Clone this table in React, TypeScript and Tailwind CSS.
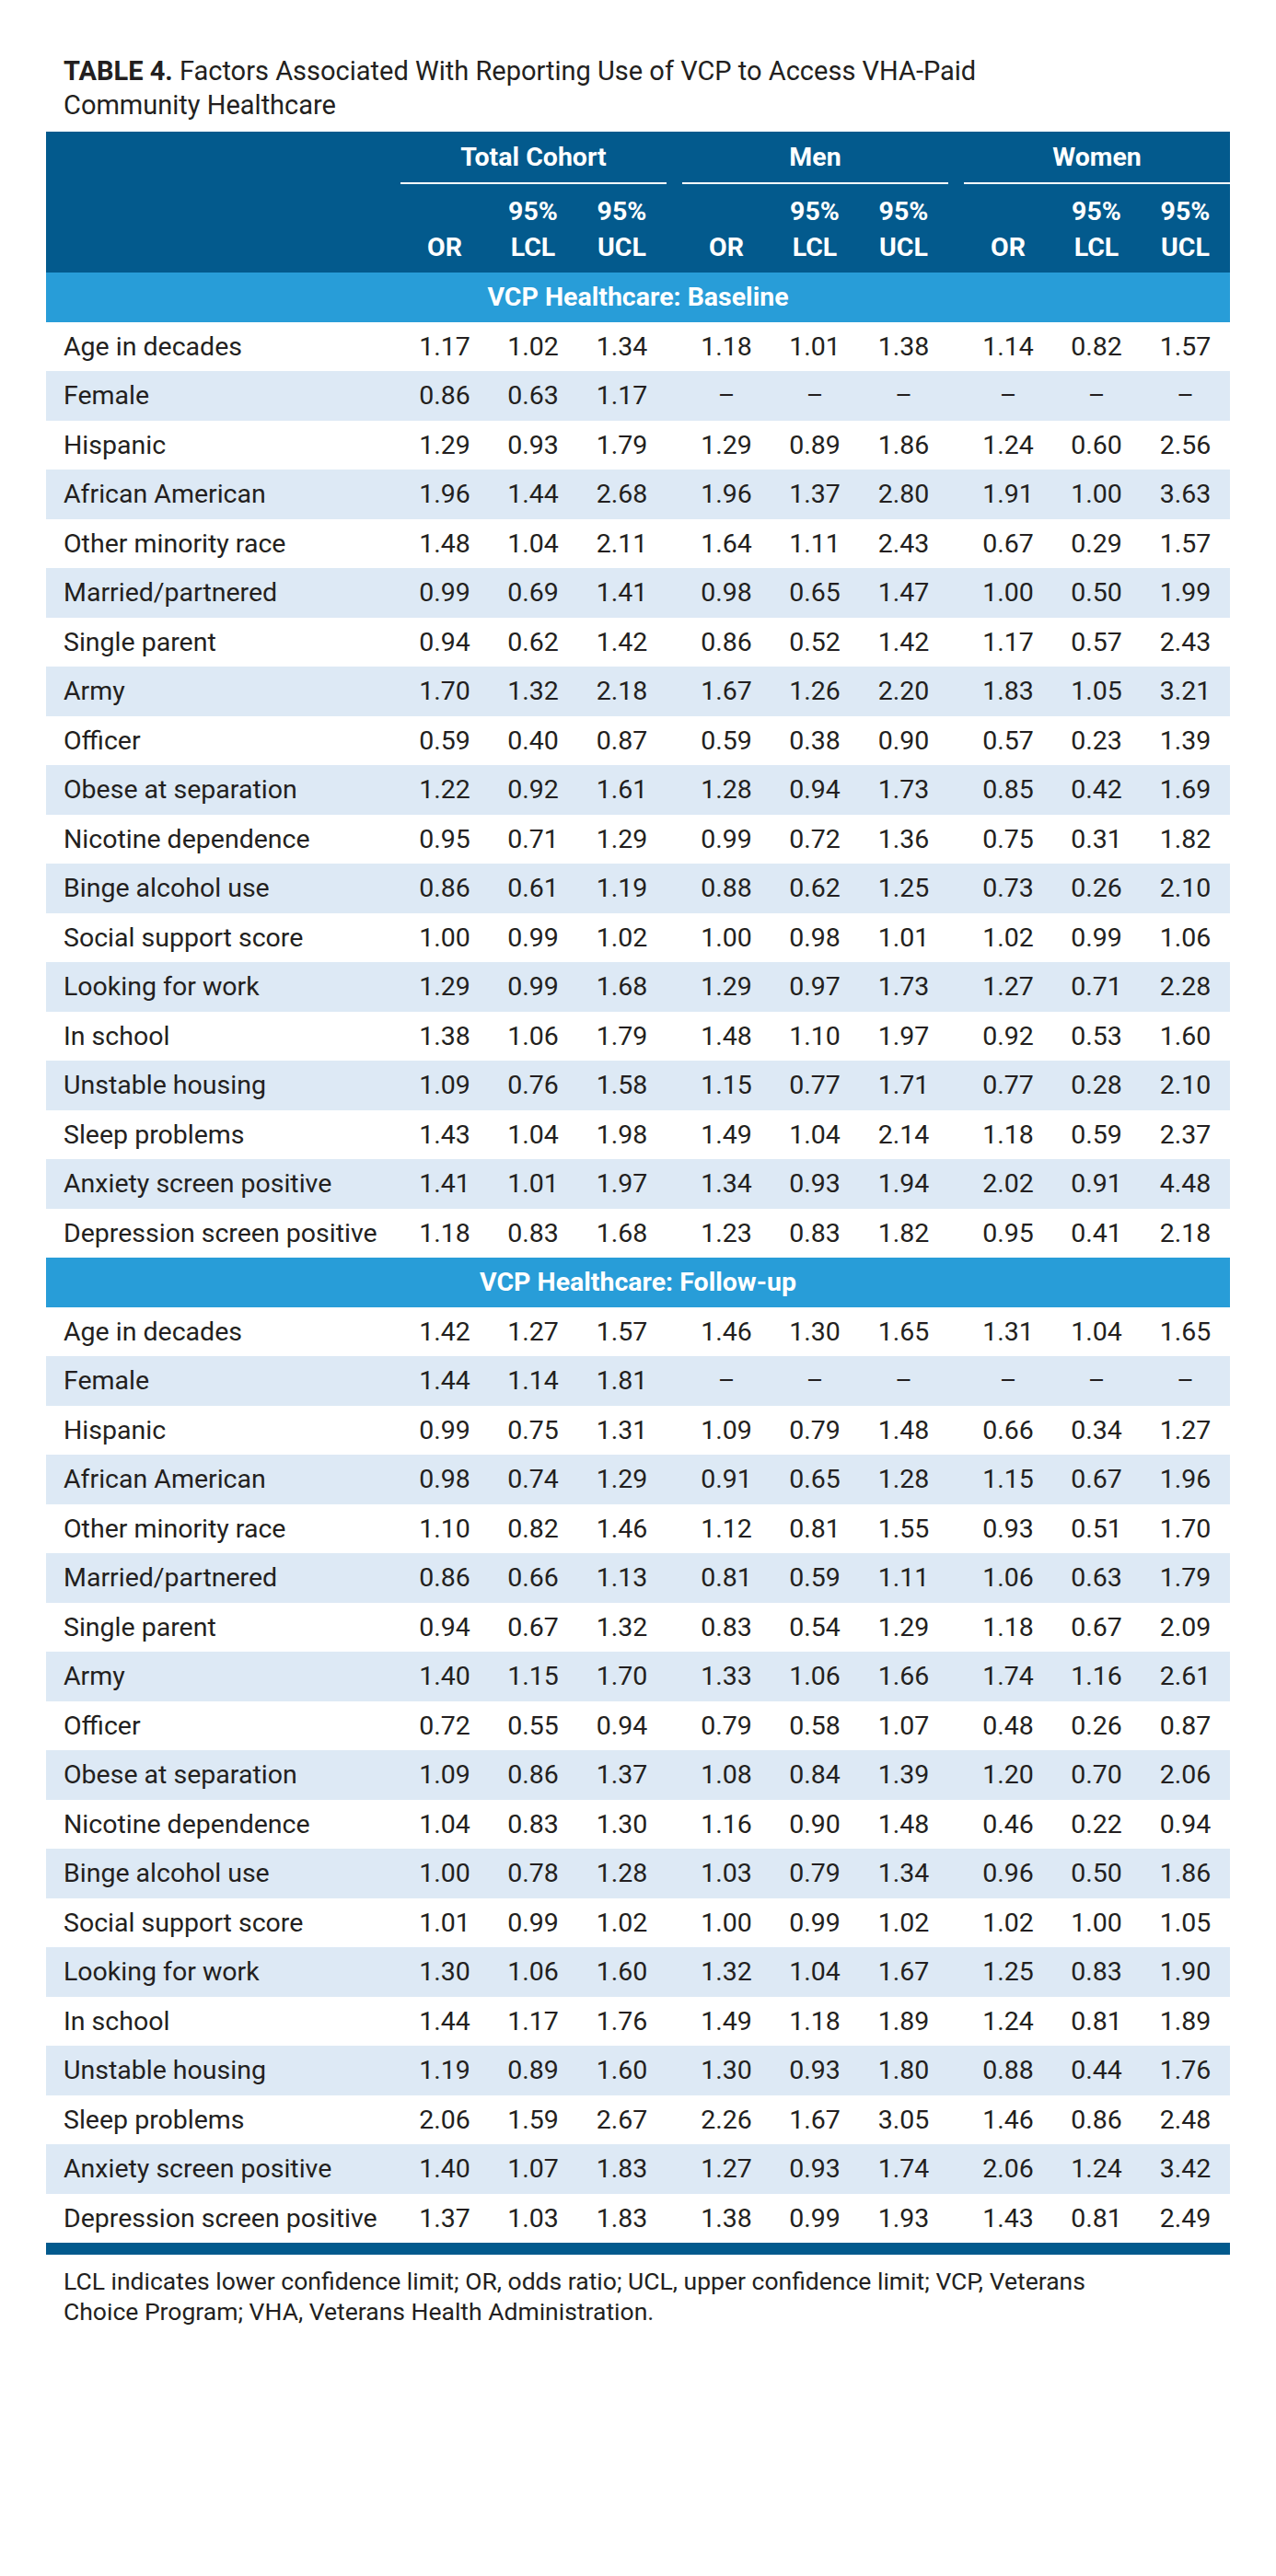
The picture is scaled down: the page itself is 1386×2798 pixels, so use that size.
import React from 'react';

type Row = [string, string[]];

const baseline: Row[] = [
  ['Age in decades', ['1.17', '1.02', '1.34', '1.18', '1.01', '1.38', '1.14', '0.82', '1.57']],
  ['Female', ['0.86', '0.63', '1.17', '–', '–', '–', '–', '–', '–']],
  ['Hispanic', ['1.29', '0.93', '1.79', '1.29', '0.89', '1.86', '1.24', '0.60', '2.56']],
  ['African American', ['1.96', '1.44', '2.68', '1.96', '1.37', '2.80', '1.91', '1.00', '3.63']],
  ['Other minority race', ['1.48', '1.04', '2.11', '1.64', '1.11', '2.43', '0.67', '0.29', '1.57']],
  ['Married/partnered', ['0.99', '0.69', '1.41', '0.98', '0.65', '1.47', '1.00', '0.50', '1.99']],
  ['Single parent', ['0.94', '0.62', '1.42', '0.86', '0.52', '1.42', '1.17', '0.57', '2.43']],
  ['Army', ['1.70', '1.32', '2.18', '1.67', '1.26', '2.20', '1.83', '1.05', '3.21']],
  ['Officer', ['0.59', '0.40', '0.87', '0.59', '0.38', '0.90', '0.57', '0.23', '1.39']],
  ['Obese at separation', ['1.22', '0.92', '1.61', '1.28', '0.94', '1.73', '0.85', '0.42', '1.69']],
  ['Nicotine dependence', ['0.95', '0.71', '1.29', '0.99', '0.72', '1.36', '0.75', '0.31', '1.82']],
  ['Binge alcohol use', ['0.86', '0.61', '1.19', '0.88', '0.62', '1.25', '0.73', '0.26', '2.10']],
  ['Social support score', ['1.00', '0.99', '1.02', '1.00', '0.98', '1.01', '1.02', '0.99', '1.06']],
  ['Looking for work', ['1.29', '0.99', '1.68', '1.29', '0.97', '1.73', '1.27', '0.71', '2.28']],
  ['In school', ['1.38', '1.06', '1.79', '1.48', '1.10', '1.97', '0.92', '0.53', '1.60']],
  ['Unstable housing', ['1.09', '0.76', '1.58', '1.15', '0.77', '1.71', '0.77', '0.28', '2.10']],
  ['Sleep problems', ['1.43', '1.04', '1.98', '1.49', '1.04', '2.14', '1.18', '0.59', '2.37']],
  ['Anxiety screen positive', ['1.41', '1.01', '1.97', '1.34', '0.93', '1.94', '2.02', '0.91', '4.48']],
  ['Depression screen positive', ['1.18', '0.83', '1.68', '1.23', '0.83', '1.82', '0.95', '0.41', '2.18']],
];

const followUp: Row[] = [
  ['Age in decades', ['1.42', '1.27', '1.57', '1.46', '1.30', '1.65', '1.31', '1.04', '1.65']],
  ['Female', ['1.44', '1.14', '1.81', '–', '–', '–', '–', '–', '–']],
  ['Hispanic', ['0.99', '0.75', '1.31', '1.09', '0.79', '1.48', '0.66', '0.34', '1.27']],
  ['African American', ['0.98', '0.74', '1.29', '0.91', '0.65', '1.28', '1.15', '0.67', '1.96']],
  ['Other minority race', ['1.10', '0.82', '1.46', '1.12', '0.81', '1.55', '0.93', '0.51', '1.70']],
  ['Married/partnered', ['0.86', '0.66', '1.13', '0.81', '0.59', '1.11', '1.06', '0.63', '1.79']],
  ['Single parent', ['0.94', '0.67', '1.32', '0.83', '0.54', '1.29', '1.18', '0.67', '2.09']],
  ['Army', ['1.40', '1.15', '1.70', '1.33', '1.06', '1.66', '1.74', '1.16', '2.61']],
  ['Officer', ['0.72', '0.55', '0.94', '0.79', '0.58', '1.07', '0.48', '0.26', '0.87']],
  ['Obese at separation', ['1.09', '0.86', '1.37', '1.08', '0.84', '1.39', '1.20', '0.70', '2.06']],
  ['Nicotine dependence', ['1.04', '0.83', '1.30', '1.16', '0.90', '1.48', '0.46', '0.22', '0.94']],
  ['Binge alcohol use', ['1.00', '0.78', '1.28', '1.03', '0.79', '1.34', '0.96', '0.50', '1.86']],
  ['Social support score', ['1.01', '0.99', '1.02', '1.00', '0.99', '1.02', '1.02', '1.00', '1.05']],
  ['Looking for work', ['1.30', '1.06', '1.60', '1.32', '1.04', '1.67', '1.25', '0.83', '1.90']],
  ['In school', ['1.44', '1.17', '1.76', '1.49', '1.18', '1.89', '1.24', '0.81', '1.89']],
  ['Unstable housing', ['1.19', '0.89', '1.60', '1.30', '0.93', '1.80', '0.88', '0.44', '1.76']],
  ['Sleep problems', ['2.06', '1.59', '2.67', '2.26', '1.67', '3.05', '1.46', '0.86', '2.48']],
  ['Anxiety screen positive', ['1.40', '1.07', '1.83', '1.27', '0.93', '1.74', '2.06', '1.24', '3.42']],
  ['Depression screen positive', ['1.37', '1.03', '1.83', '1.38', '0.99', '1.93', '1.43', '0.81', '2.49']],
];

const grid = 'grid grid-cols-[385px_96px_96px_97px_17px_96px_96px_97px_17px_96px_96px_97px]';

const DataRow = ({ row, shaded }: { row: Row; shaded: boolean }) => {
  const [label, vals] = row;
  const cells = [vals.slice(0, 3), vals.slice(3, 6), vals.slice(6, 9)];
  return (
    <div className={`${grid} h-[53.5px] items-center ${shaded ? 'bg-[#dde9f5]' : 'bg-white'}`}>
      <div className="pl-[19px] whitespace-nowrap">{label}</div>
      {cells.map((group, gi) => (
        <React.Fragment key={gi}>
          {gi > 0 && <div />}
          {group.map((v, i) => (
            <div key={i} className="text-center">{v}</div>
          ))}
        </React.Fragment>
      ))}
    </div>
  );
};

const SectionBar = ({ title }: { title: string }) => (
  <div className="h-[53.5px] bg-[#289dd8] flex items-center justify-center font-bold text-white">
    {title}
  </div>
);

const GroupHead = ({ name }: { name: string }) => (
  <div className="col-span-3 flex flex-col">
    <div className="h-[55px] flex items-center justify-center">{name}</div>
    <div className="h-[2px] bg-white" />
  </div>
);

const SubHead = () => (
  <>
    <div className="flex items-end justify-center">OR</div>
    <div className="flex flex-col items-center">
      <span>95%</span>
      <span>LCL</span>
    </div>
    <div className="flex flex-col items-center">
      <span>95%</span>
      <span>UCL</span>
    </div>
  </>
);

export default function App() {
  return (
    <div
      className="min-h-[2798px] bg-white text-[#231f20] pt-[59px]"
      style={{ fontFamily: 'Roboto, "Liberation Sans", sans-serif' }}
    >
      <div className="pl-[69px] text-[29px] leading-[37px] whitespace-nowrap">
        <span className="font-bold">TABLE 4.</span> Factors Associated With Reporting Use of VCP to Access VHA-Paid
        <br />
        Community Healthcare
      </div>

      <div className="ml-[50px] w-[1286px] mt-[10px] text-[28.5px] leading-[39px]">
        {/* Header */}
        <div className="bg-[#035a8d] text-white font-bold">
          <div className={grid}>
            <div />
            <GroupHead name="Total Cohort" />
            <div />
            <GroupHead name="Men" />
            <div />
            <GroupHead name="Women" />
          </div>
          <div className={`${grid} h-[96px] pt-[10px] pb-[8px]`}>
            <div />
            <SubHead />
            <div />
            <SubHead />
            <div />
            <SubHead />
          </div>
        </div>

        <SectionBar title="VCP Healthcare: Baseline" />
        {baseline.map((r, i) => (
          <DataRow key={r[0]} row={r} shaded={i % 2 === 1} />
        ))}

        <SectionBar title="VCP Healthcare: Follow-up" />
        {followUp.map((r, i) => (
          <DataRow key={r[0]} row={r} shaded={i % 2 === 1} />
        ))}

        <div className="h-[13px] bg-[#035a8d]" />
      </div>

      <div className="pl-[69px] mt-[12px] text-[26.5px] leading-[33px] whitespace-nowrap">
        LCL indicates lower confidence limit; OR, odds ratio; UCL, upper confidence limit; VCP, Veterans
        <br />
        Choice Program; VHA, Veterans Health Administration.
      </div>
    </div>
  );
}
